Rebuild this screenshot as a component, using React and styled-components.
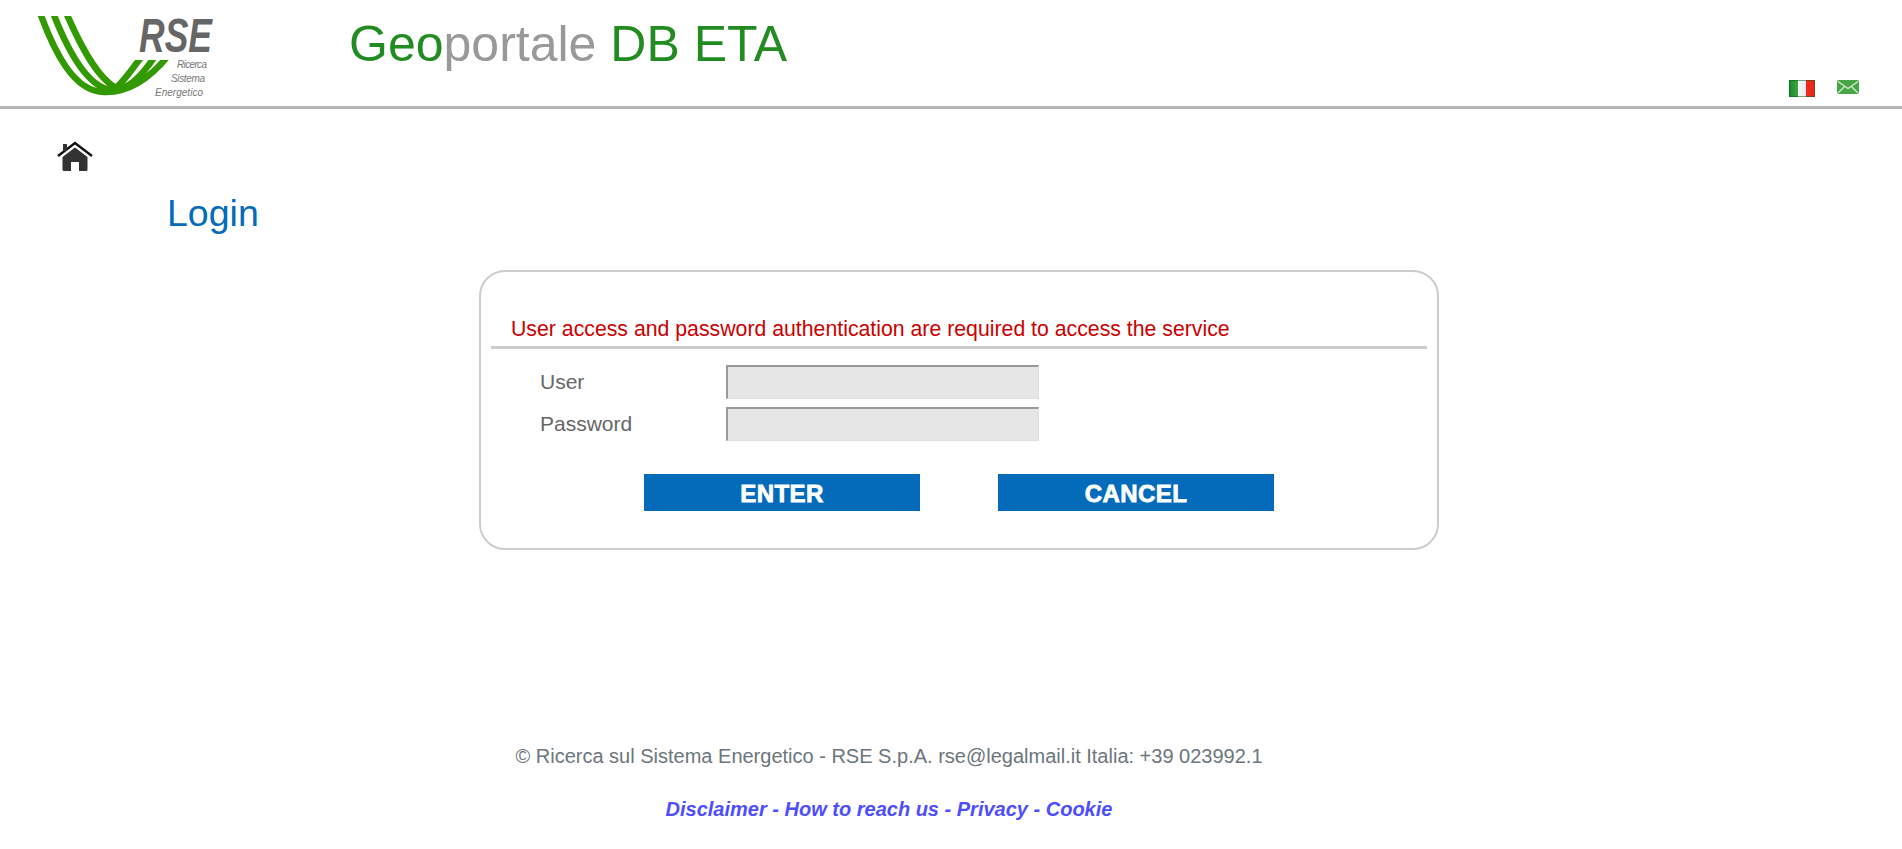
import React from 'react'
import styled, { createGlobalStyle } from 'styled-components'

const GlobalStyle = createGlobalStyle`
  html, body {
    margin: 0;
    padding: 0;
    background: #fff;
    font-family: "Liberation Sans", Arial, sans-serif;
  }
`

const Page = styled.div`
  width: 1902px;
  height: 849px;
  overflow: hidden;
`

const Header = styled.header`
  display: flex;
  align-items: flex-start;
  height: 106px;
  border-bottom: 3px solid #b5b5b5;
`

const Logo = styled.svg`
  flex: none;
  width: 220px;
  height: 100px;
  margin-left: 30px;
`

const Title = styled.h1`
  margin: 14px 0 0 99px;
  font-size: 50px;
  line-height: 60px;
  font-weight: normal;
  color: #228b22;
  white-space: pre;
`

const Grey = styled.span`
  color: #999;
`

const Tools = styled.div`
  display: flex;
  align-items: flex-start;
  gap: 22px;
  margin: 80px 0 0 auto;
  padding-right: 43px;
`

const HomeBar = styled.div`
  padding: 32px 0 0 57px;
  height: 32px;
`

const Heading = styled.h2`
  margin: 18px 0 0 167px;
  font-size: 37.5px;
  line-height: 44px;
  font-weight: normal;
  color: #036bb9;
`

const LoginBox = styled.form`
  box-sizing: border-box;
  width: 960px;
  height: 280px;
  margin: 35px 0 0 479px;
  padding: 43px 10px 0;
  border: 2px solid #ccc;
  border-radius: 26px;
`

const Message = styled.div`
  padding: 0 0 3px 20px;
  font-size: 21.27px;
  line-height: 28px;
  color: #c00;
  border-bottom: 3px solid #ccc;
`

const Fields = styled.div`
  display: flex;
  flex-direction: column;
  gap: 8px;
  margin: 16px 0 0 49px;
`

const Row = styled.label`
  display: flex;
  align-items: center;
  font-size: 21px;
  color: #666;
`

const FieldName = styled.span`
  width: 186px;
`

const Input = styled.input`
  box-sizing: border-box;
  width: 313px;
  height: 34px;
  padding: 0 4px;
  background: #e6e6e6;
  border-style: solid;
  border-width: 2px 1px 1px 2px;
  border-color: #999 #e0e0e0 #e0e0e0 #999;
  border-radius: 0;
`

const Buttons = styled.div`
  display: flex;
  gap: 78px;
  margin: 33px 0 0 153px;
`

const Button = styled.button`
  width: 276px;
  height: 37px;
  padding: 2px 0 0;
  border: none;
  background: #036bb9;
  color: #fff;
  font-family: inherit;
  font-size: 24px;
  font-weight: bold;
  letter-spacing: 0.4px;
  -webkit-text-stroke: 0.8px #fff;
`

const Footer = styled.footer`
  width: 1778px;
  margin-top: 194px;
  text-align: center;
`

const Copyright = styled.div`
  font-size: 20px;
  line-height: 24px;
  color: #6c757d;
`

const FooterLinks = styled.div`
  margin-top: 29px;
  font-size: 20px;
  line-height: 24px;
  font-weight: bold;
  font-style: italic;
  color: #4d4dff;
`

const FooterLink = styled.a`
  color: inherit;
  text-decoration: none;
`

const RseLogo = () => (
  <Logo viewBox="30 0 220 100">
    <defs>
      <clipPath id="swooshCut">
        <path d="M30 16 H125 V60 H175 V100 H30 Z" />
      </clipPath>
    </defs>
    <g fill="none" stroke="#339900" strokeWidth="6.5" clipPath="url(#swooshCut)">
      <path d="M39 10 C54 52 74 92 104 92 C128 93 150 78 168 56" />
      <path d="M52 10 C68 52 88 88 112 90 C128 91 142 76 155 56" />
      <path d="M65 10 C82 50 98 78 116 88 C125 80 133 68 142 56" />
    </g>
    <text x="139" y="52" fontFamily="Liberation Sans, sans-serif" fontWeight="bold" fontStyle="italic" fontSize="48" fill="#666" textLength="73" lengthAdjust="spacingAndGlyphs">RSE</text>
    <g fontFamily="Liberation Sans, sans-serif" fontStyle="italic" fontSize="10" fill="#777">
      <text x="177" y="68" textLength="30">Ricerca</text>
      <text x="171" y="82" textLength="34">Sistema</text>
      <text x="155" y="96" textLength="48">Energetico</text>
    </g>
  </Logo>
)

const FlagIcon = () => (
  <svg width="26" height="17" viewBox="0 0 26 17">
    <defs>
      <linearGradient id="flagShade" x1="0" y1="0" x2="1" y2="0">
        <stop offset="0" stopColor="#000" stopOpacity="0.12" />
        <stop offset="0.35" stopColor="#fff" stopOpacity="0.12" />
        <stop offset="1" stopColor="#000" stopOpacity="0.04" />
      </linearGradient>
    </defs>
    <rect width="9" height="17" fill="#1f9a2c" />
    <rect x="9" width="8" height="17" fill="#f6f6f6" />
    <rect x="17" width="9" height="17" fill="#f8261c" />
    <rect width="26" height="17" fill="url(#flagShade)" />
    <rect x="0.5" y="0.5" width="25" height="16" fill="none" stroke="#0a5a14" strokeOpacity="0.5" />
  </svg>
)

const MailIcon = () => (
  <svg width="22" height="14" viewBox="0 0 22 14">
    <rect width="22" height="14" rx="2" fill="#46a546" />
    <path d="M1 1.5 L11 8.5 L21 1.5 M1 13 L7.5 6.5 M21 13 L14.5 6.5" fill="none" stroke="#d7eed7" strokeWidth="1.2" />
  </svg>
)

const HomeIcon = () => (
  <svg width="36" height="32" viewBox="0 0 36 32">
    <path d="M1 15 L18 2 L35 15" fill="none" stroke="#111" strokeWidth="2.4" />
    <rect x="6" y="3" width="4" height="7" fill="#333" />
    <path d="M5.5 16 L18 6.5 L30.5 16 V28.5 Q30.5 30 29 30 H22 V21 H14 V30 H7 Q5.5 30 5.5 28.5 Z" fill="#333" />
  </svg>
)

export default function App() {
  return (
    <Page>
      <GlobalStyle />
      <Header>
        <RseLogo />
        <Title>Geo<Grey>portale</Grey> DB ETA</Title>
        <Tools>
          <FlagIcon />
          <MailIcon />
        </Tools>
      </Header>
      <HomeBar>
        <HomeIcon />
      </HomeBar>
      <Heading>Login</Heading>
      <LoginBox onSubmit={(e) => e.preventDefault()}>
        <Message>User access and password authentication are required to access the service</Message>
        <Fields>
          <Row>
            <FieldName>User</FieldName>
            <Input name="user" />
          </Row>
          <Row>
            <FieldName>Password</FieldName>
            <Input name="password" type="password" />
          </Row>
        </Fields>
        <Buttons>
          <Button type="submit">ENTER</Button>
          <Button type="button">CANCEL</Button>
        </Buttons>
      </LoginBox>
      <Footer>
        <Copyright>© Ricerca sul Sistema Energetico - RSE S.p.A. rse@legalmail.it Italia: +39 023992.1</Copyright>
        <FooterLinks>
          <FooterLink href="#">Disclaimer</FooterLink> - <FooterLink href="#">How to reach us</FooterLink> - <FooterLink href="#">Privacy</FooterLink> - <FooterLink href="#">Cookie</FooterLink>
        </FooterLinks>
      </Footer>
    </Page>
  )
}
